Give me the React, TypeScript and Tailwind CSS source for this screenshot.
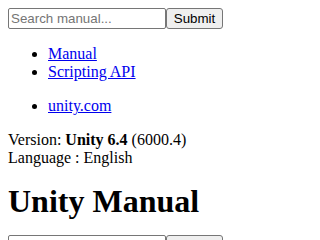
import React from 'react'

// Unstyled-looking docs header: search form, nav lists, version info, title
function SearchForm() {
  return (
    <form className="flex items-start h-[21px]" onSubmit={(e) => e.preventDefault()}>
      <input
        type="text"
        placeholder="Search manual..."
        className="w-[158px] h-[21px] border border-[#767676] rounded-[2px] px-[2px] text-[13.33px] font-['Liberation_Sans',Arial,sans-serif] text-black placeholder:text-[#757575] bg-white"
      />
      <button
        type="submit"
        className="h-[21px] w-[57px] border border-[#767676] rounded-[3px] bg-[#efefef] text-[13.33px] font-['Liberation_Sans',Arial,sans-serif] text-black"
      >
        Submit
      </button>
    </form>
  )
}

export default function App() {
  return (
    <div className="p-2 bg-white text-black text-base leading-[normal] font-['Liberation_Serif','Times_New_Roman',serif] h-[240px] overflow-hidden">
      <SearchForm />

      <ul className="list-disc pl-10 my-4">
        <li>
          <a href="#" className="text-[#0000ee] underline">Manual</a>
        </li>
        <li>
          <a href="#" className="text-[#0000ee] underline">Scripting API</a>
        </li>
      </ul>

      <ul className="list-disc pl-10 my-4">
        <li>
          <a href="#" className="text-[#0000ee] underline">unity.com</a>
        </li>
      </ul>

      <div>
        Version: <b>Unity 6.4</b> (6000.4)
      </div>
      <div>Language : English</div>

      <h1 className="text-[32px] font-bold leading-[normal] mt-[16px] mb-[15px]">Unity Manual</h1>

      <SearchForm />
    </div>
  )
}
